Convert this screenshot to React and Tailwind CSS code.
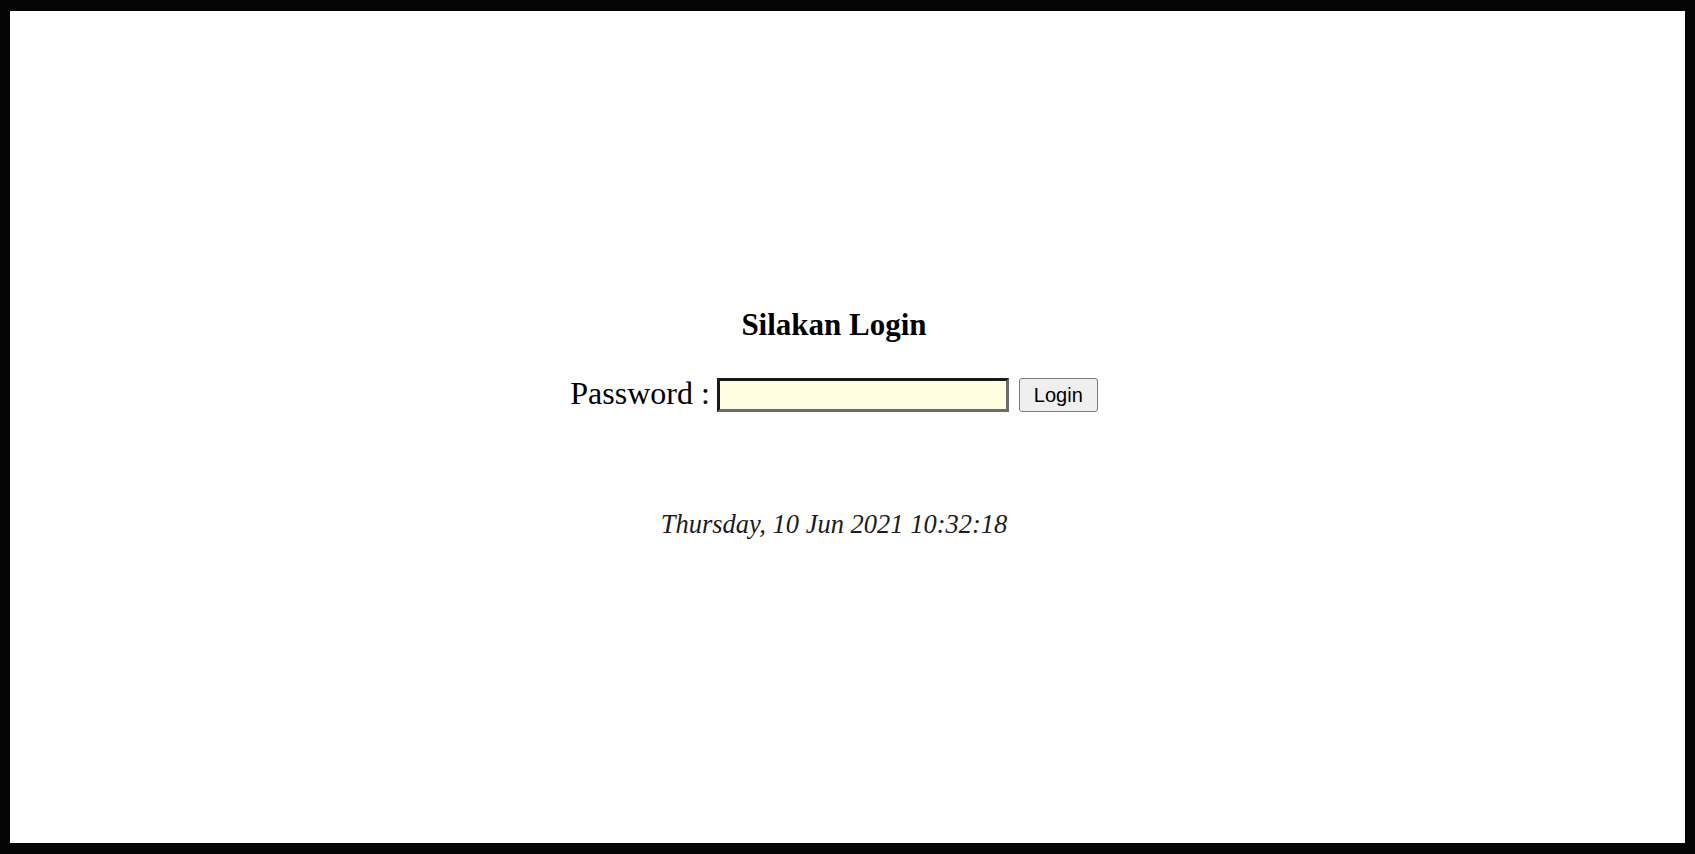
import { useState } from "react";

export default function App() {
  const [password, setPassword] = useState("");

  return (
    <div className="h-screen w-full bg-[#050505] pt-[11px] pb-[11px] px-[10px]">
      <div className="h-full w-full bg-white flex flex-col items-center pt-[296px] pr-[27px] font-['Liberation_Serif',serif] text-black">
        {/* ── Title ── */}
        <h2 className="text-[31px] leading-[36px] font-bold">Silakan Login</h2>

        {/* ── Password row ── */}
        <form
          className="mt-[35px] flex items-center h-[34px]"
          onSubmit={(e) => e.preventDefault()}
        >
          <label className="text-[32px] leading-[34px] whitespace-pre -mt-[4px]">
            Password :
          </label>
          <input
            type="password"
            value={password}
            onChange={(e) => setPassword(e.target.value)}
            className="ml-[7px] w-[292px] h-[34px] bg-[#fffde2] border-[3px] border-t-[#1a1a1a] border-l-[#1a1a1a] border-r-[#6b6b6b] border-b-[#6b6b6b] outline-none px-1"
          />
          <button
            type="submit"
            className="ml-[10px] w-[79px] h-[34px] rounded-[3px] border border-[#7a7a7a] bg-[#efefef] text-[20px] leading-none text-black font-['Liberation_Sans',Arial,sans-serif]"
          >
            Login
          </button>
        </form>

        {/* ── Clock ── */}
        <p className="mt-[97px] text-[26.5px] leading-[30px] italic text-[#1c1c1c]">
          Thursday, 10 Jun 2021 10:32:18
        </p>
      </div>
    </div>
  );
}
